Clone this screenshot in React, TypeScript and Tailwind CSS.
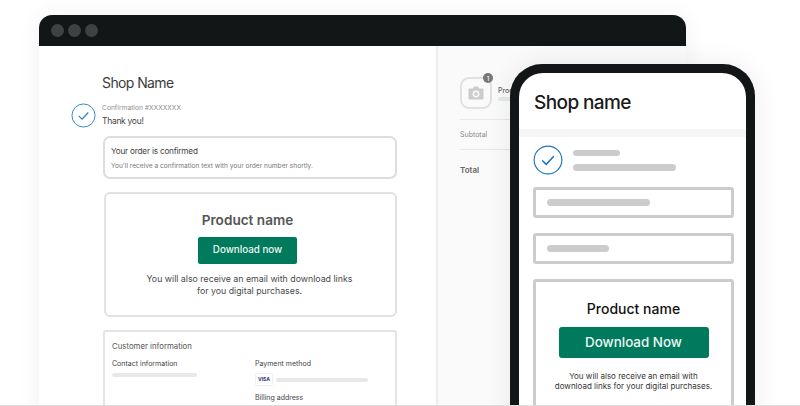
const CheckCircle = ({ size, color }: { size: number; color: string }) => (
  <svg width={size} height={size} viewBox="0 0 26 26" fill="none" className="shrink-0">
    <circle cx="13" cy="13" r="12" stroke={color} strokeWidth="1" />
    <path d="M8 13.4l3.5 3.4 6.5-7" stroke={color} strokeWidth="1.4" />
  </svg>
)

const Bar = ({ className }: { className: string }) => <div className={`rounded-full ${className}`}></div>

const DesktopMain = () => (
  <div className="w-[399px] h-full shrink-0 border-r-2 border-[#eeeeee] pl-[32px] pt-[27px] bg-white">
    <div className="pl-[31px] text-[14px] leading-[20px] text-[#3c3c3c] tracking-[-0.6px]">Shop Name</div>
    <div className="flex items-center gap-[6px] mt-[10px]">
      <CheckCircle size={25} color="#2f86c6" />
      <div>
        <div className="text-[6.7px] leading-[10px] text-[#8f8f8f]">Confirmation #XXXXXXX</div>
        <div className="text-[8.5px] leading-[13px] mt-[2px] text-[#444444] tracking-[-0.3px]">Thank you!</div>
      </div>
    </div>
    <div className="ml-[32px] mt-[8px] w-[294px] h-[43px] border-2 border-[#dddddd] rounded-[7px] px-[6px] pt-[7px]">
      <div className="text-[8.2px] leading-[13px] text-[#444444] tracking-[-0.2px]">Your order is confirmed</div>
      <div className="text-[6.6px] leading-[10px] mt-[3px] text-[#777777]">
        You'll receive a confirmation text with your order number shortly.
      </div>
    </div>
    <div className="ml-[33px] mt-[13px] w-[293px] h-[125px] border-2 border-[#e2e2e2] rounded-[6px] flex flex-col items-center pt-[16px] pr-[6px]">
      <div className="text-[13.6px] leading-[20px] font-semibold text-[#555555]">Product name</div>
      <div className="mt-[7px] w-[99px] h-[27px] rounded-[2px] bg-[#007a5c] flex items-center justify-center text-[9.8px] font-medium text-[#eef7f4]">
        Download now
      </div>
      <div className="mt-[9px] ml-[4px] text-[8.8px] leading-[12px] text-center text-[#4a4a4a]">
        You will also receive an email with download links
        <br />
        for you digital purchases.
      </div>
    </div>
    <div className="ml-[32px] mt-[13px] w-[294px] h-[90px] border-2 border-[#e4e4e4] rounded-t-[3px] px-[7px] pt-[8px]">
      <div className="text-[7.8px] leading-[12px] text-[#555555]">Customer information</div>
      <div className="grid grid-cols-[143px_1fr] mt-[7px]">
        <div>
          <div className="text-[7px] leading-[10px] text-[#444444]">Contact information</div>
          <Bar className="mt-[4px] w-[85px] h-[4px] bg-[#e6e8e9]" />
        </div>
        <div>
          <div className="text-[7px] leading-[10px] text-[#444444]">Payment method</div>
          <div className="flex items-center gap-[3px] mt-[4px]">
            <div className="w-[18px] h-[13px] rounded-[2px] border border-[#f0f0f0] flex items-center justify-center text-[5px] font-bold text-[#27337f]">
              VISA
            </div>
            <Bar className="w-[92px] h-[4px] bg-[#e6e8e9]" />
          </div>
          <div className="text-[7px] leading-[10px] text-[#444444] mt-[7px]">Billing address</div>
        </div>
      </div>
    </div>
  </div>
)

const DesktopSummary = () => (
  <div className="flex-1 h-full bg-[#fafafa] pl-[22px] pt-[31px]">
    <div className="flex items-center gap-[6px]">
      <div className="relative w-[32px] h-[32px] border-2 border-[#e0e0e0] rounded-[9px] flex items-center justify-center">
        <svg width="16" height="14" viewBox="0 0 16 14" fill="#cccccc">
          <path d="M1.5 2.5h3.2L6 .5h4l1.3 2h3.2a1 1 0 0 1 1 1v9a1 1 0 0 1-1 1h-13a1 1 0 0 1-1-1v-9a1 1 0 0 1 1-1zM8 4.6a3.4 3.4 0 1 0 0 6.8 3.4 3.4 0 0 0 0-6.8zm0 1.5a1.9 1.9 0 1 1 0 3.8 1.9 1.9 0 0 1 0-3.8z" fillRule="evenodd" />
        </svg>
        <div className="absolute -top-[6px] -right-[3px] w-[10px] h-[10px] rounded-full bg-[#777777] flex items-center justify-center text-[6px] font-medium text-white">
          1
        </div>
      </div>
      <div>
        <div className="text-[7px] leading-[9px] font-medium text-[#666666]">Product</div>
        <Bar className="mt-[2px] w-[30px] h-[4px] bg-[#e6e8e9]" />
      </div>
    </div>
    <div className="mt-[10px] border-t border-[#e8e8e8] pt-[10px] h-[30px] text-[7px] leading-[10px] text-[#8a8a8a]">
      Subtotal
    </div>
    <div className="border-t border-[#e8e8e8] pt-[15px] text-[8px] leading-[10px] font-semibold text-[#666666]">
      Total
    </div>
  </div>
)

const PhoneCard = ({ barWidth }: { barWidth: string }) => (
  <div className="h-[31px] border-[3px] border-[#cccccc] rounded-[3px] flex items-center pl-[11px]">
    <Bar className={`h-[7px] bg-[#cccccc] ${barWidth}`} />
  </div>
)

const Phone = () => (
  <div className="absolute left-[510px] top-[64px] w-[245px] h-[360px] bg-[#131617] rounded-t-[32px] pt-[9px] px-[9px] shadow-[0_0_28px_rgba(0,0,0,0.08)]">
    <div className="bg-white h-full rounded-t-[24px] overflow-hidden">
      <div className="h-[56px] pl-[15px] pt-[18px] text-[19px] leading-[24px] font-medium text-[#1a1a1a] tracking-[-0.6px]">
        Shop name
      </div>
      <div className="h-[8px] bg-[#f6f6f6]"></div>
      <div className="pl-[14px] pt-[8px]">
        <div className="flex items-center gap-[10px]">
          <CheckCircle size={30} color="#1d75bc" />
          <div className="flex flex-col gap-[8px]">
            <Bar className="w-[47px] h-[6px] bg-[#cccccc]" />
            <Bar className="w-[103px] h-[7px] bg-[#cccccc]" />
          </div>
        </div>
        <div className="mt-[12px] flex flex-col gap-[15px] w-[201px]">
          <PhoneCard barWidth="w-[103px]" />
          <PhoneCard barWidth="w-[62px]" />
          <div className="h-[140px] border-[3px] border-[#cccccc] rounded-[3px] flex flex-col items-center pt-[17px]">
            <div className="text-[14px] leading-[20px] font-medium text-[#111111]">Product name</div>
            <div className="mt-[8px] w-[150px] h-[31px] rounded-[3px] bg-[#007a5c] flex items-center justify-center text-[13.4px] font-medium text-[#eef7f4]">
              Download Now
            </div>
            <div className="mt-[13px] text-[8px] leading-[10px] text-center text-[#333333]">
              You will also receive an email with
              <br />
              download links for your digital purchases.
            </div>
          </div>
        </div>
      </div>
    </div>
  </div>
)

export default function App() {
  return (
    <div className="relative w-[800px] h-[406px] overflow-hidden bg-white font-['Inter',sans-serif] pl-[39px] pt-[15px]">
      <div className="w-[647px] h-[420px] rounded-t-[13px] overflow-hidden shadow-[0_0_24px_rgba(0,0,0,0.06)] bg-white">
        <div className="h-[31px] bg-[#131617] flex items-center gap-[4px] pl-[12px]">
          <div className="w-[13px] h-[13px] rounded-full bg-[#3f4142]"></div>
          <div className="w-[13px] h-[13px] rounded-full bg-[#3f4142]"></div>
          <div className="w-[13px] h-[13px] rounded-full bg-[#3f4142]"></div>
        </div>
        <div className="flex h-[389px]">
          <DesktopMain />
          <DesktopSummary />
        </div>
      </div>
      <Phone />
      <div className="absolute left-0 right-0 bottom-0 h-[1px] bg-[#dedede]"></div>
    </div>
  )
}
